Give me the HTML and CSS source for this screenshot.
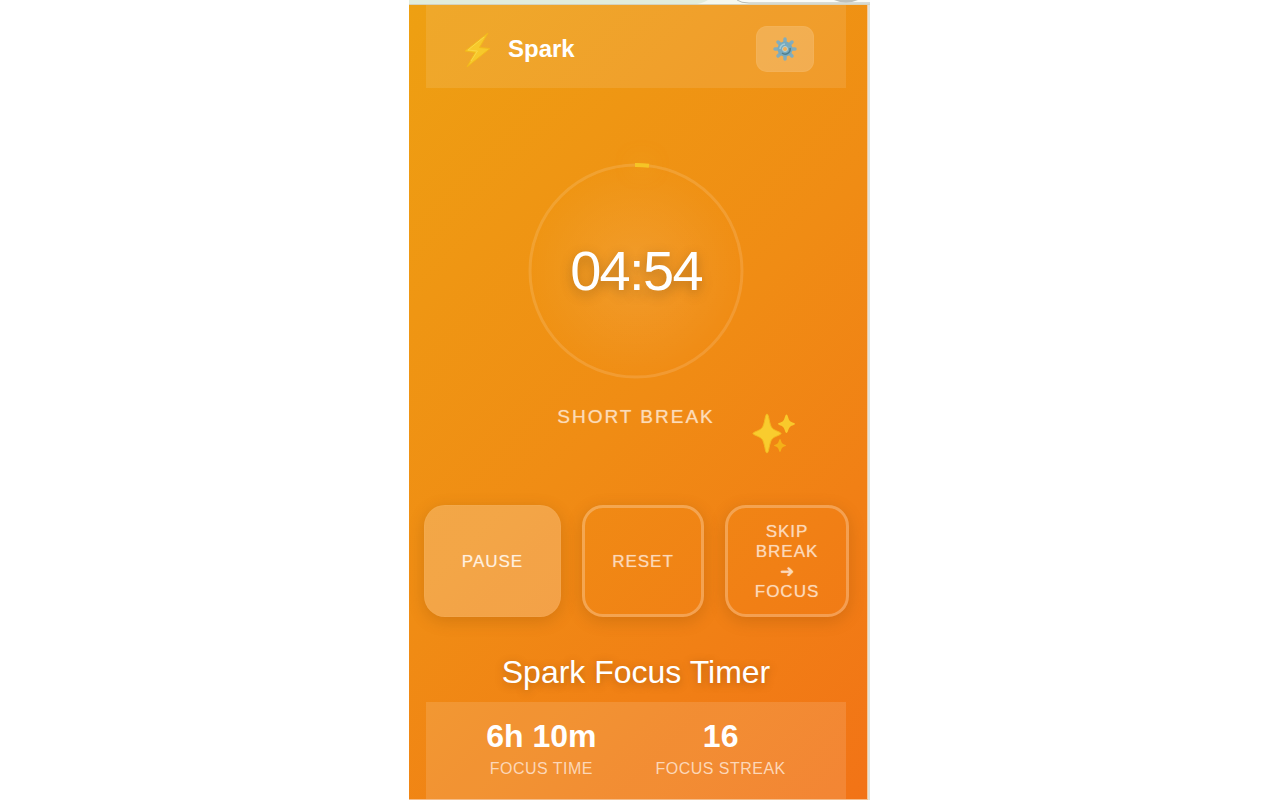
FILE: index.html
```html
<!DOCTYPE html>
<html lang="en">
<head>
<meta charset="utf-8">
<title>Spark Focus Timer</title>
<meta name="viewport" content="width=device-width, initial-scale=1">
<link rel="stylesheet" href="styles.css">
</head>
<body>
<div class="window">
  <div class="window-edge" aria-hidden="true">
    <svg viewBox="0 0 461 5" preserveAspectRatio="none">
      <rect width="461" height="5" fill="#f5f8ef"/>
      <path d="M0 0H299Q293 4 282 5H0Z" fill="#e1ecdc"/>
      <path d="M328 0Q332 3 340 3H461V0Z" fill="#fafcf7"/>
      <path d="M328 0Q332 3 340 3H461" fill="none" stroke="#b8bcb3"/>
      <path d="M425 0Q437 5 449 0Z" fill="#bec1bb"/>
      <path d="M0 4.5H461" stroke="#d5d2bd"/>
    </svg>
  </div>
  <main class="app">
    <header class="topbar">
      <div class="brand">
        <svg class="bolt" viewBox="0 0 28 36" aria-hidden="true">
          <path d="M25 1 2 19 12 20.500 4 35 27 16.500 16.500 15.500Z" fill="#f7c92b" stroke="#f3b91c" stroke-width="1" stroke-linejoin="round"/>
          <path d="M21 5 5 18 14.500 19 8 29" fill="none" stroke="#fad746" stroke-width="1"/>
        </svg>
        <span>Spark</span>
      </div>
      <button class="settings" type="button" aria-label="Settings">
        <svg viewBox="0 0 24 24" aria-hidden="true">
          <g stroke="#82adbe" stroke-width="3.500" stroke-linecap="round">
            <path d="M12 2V22M2 12H22M5 5 19 19M19 5 5 19"/>
          </g>
          <circle cx="12" cy="12" r="7.500" fill="#79aabd"/>
          <path d="M7 12A5 5 0 0 1 12 7" fill="none" stroke="#a2cbd6" stroke-width="1.500"/>
          <path d="M9 16A5 5 0 0 0 17 11" fill="none" stroke="#507f8e" stroke-width="1.500"/>
          <circle cx="12" cy="12" r="2.500" fill="#f4ae54" stroke="#b6d1d3" stroke-width="1"/>
        </svg>
      </button>
    </header>

    <section class="timer" aria-label="Timer">
      <div class="dial">
        <svg class="ring" viewBox="0 0 216 216" aria-hidden="true">
          <circle class="ring-track" cx="108" cy="108" r="106"/>
          <path class="ring-progress" d="M107 2A106 106 0 0 1 121 2.800"/>
        </svg>
        <time class="clock">04:54</time>
      </div>
      <p class="phase">SHORT BREAK</p>
      <svg class="sparkles" viewBox="0 0 44 42" aria-hidden="true">
        <path d="M15 1C17 1 17 11 20 15C23 18 29 19 29 20.500C29 22 23 23 20 26C17 30 17 40 15 40C13 40 13 30 10 26C7 23 1 22 1 20.500C1 19 7 18 10 15C13 11 13 1 15 1Z" fill="#f9cc2e" stroke="#f4bb20"/>
        <path d="M34.500 1.500C36 1.500 36 6 38 8C40 10 43 9.500 43 11C43 12 40 12 38 14C36 16 36 20 34.500 20C33 20 33 16 31 14C29 12 26 12 26 11C26 9.500 29 10 31 8C33 6 33 1.500 34.500 1.500Z" fill="#f9c92b"/>
        <path d="M28 26C29 26 29 29 30.500 30.500C32 32 34 31.500 34 32.500C34 33.500 32 33 30.500 34.500C29 36 29 39 28 39C27 39 27 36 25.500 34.500C24 33 22 33.500 22 32.500C22 31.500 24 32 25.500 30.500C27 29 27 26 28 26Z" fill="#f4b018"/>
      </svg>
    </section>

    <div class="controls">
      <button class="control primary" type="button">PAUSE</button>
      <button class="control" type="button">RESET</button>
      <button class="control skip" type="button">SKIP BREAK ➜ FOCUS</button>
    </div>

    <h1 class="title">Spark Focus Timer</h1>

    <footer class="stats">
      <div class="stat">
        <strong>6h 10m</strong>
        <span>FOCUS TIME</span>
      </div>
      <div class="stat">
        <strong>16</strong>
        <span>FOCUS STREAK</span>
      </div>
    </footer>
  </main>
</div>
</body>
</html>
```

FILE: styles.css
```css
* {
  box-sizing: border-box;
}

body {
  margin: 0;
  min-height: 100vh;
  display: flex;
  justify-content: center;
  padding-right: 1px;
  background: #fff;
  color: #fff;
  font-family: "Liberation Sans", Arial, sans-serif;
}

.window {
  width: 100%;
  max-width: 461px;
  display: flex;
  flex-direction: column;
  background: #e1e2d9;
  padding-bottom: 1px;
}

.window-edge svg {
  display: block;
  width: 100%;
  height: 5px;
}

.app {
  flex: 1;
  display: flex;
  flex-direction: column;
  margin-right: 2px;
  padding: 0 21px 0 17px;
  border-right: 1px solid #f6c898;
  border-bottom: 1px solid #f4bd8b;
  background: linear-gradient(135deg, #eea012 0%, #f08c14 50%, #f27316 100%);
}

.topbar {
  display: flex;
  align-items: center;
  justify-content: space-between;
  padding: 21px 32px 16px 37px;
  background: rgba(255, 255, 255, 0.1);
}

.brand {
  display: flex;
  align-items: center;
  gap: 17px;
  font-size: 24px;
  line-height: 28px;
  font-weight: 700;
}

.bolt {
  width: 28px;
  height: 36px;
  margin-top: 2px;
}

.settings {
  display: flex;
  align-items: center;
  justify-content: center;
  width: 58px;
  height: 46px;
  padding: 0;
  border: 1px solid rgba(255, 255, 255, 0.04);
  border-radius: 11px;
  background: rgba(255, 255, 255, 0.18);
}

.settings svg {
  width: 24px;
  height: 24px;
}

.timer {
  position: relative;
  display: flex;
  flex-direction: column;
  align-items: center;
  gap: 26px;
  padding-top: 75px;
}

.dial {
  position: relative;
  display: grid;
  place-items: center;
  width: 216px;
  height: 216px;
  border-radius: 50%;
  background: radial-gradient(circle, rgba(255, 255, 255, 0.1) 0%, rgba(255, 255, 255, 0) 70%);
}

.ring {
  position: absolute;
  inset: 0;
  overflow: visible;
}

.ring-track {
  fill: none;
  stroke: rgba(255, 255, 255, 0.13);
  stroke-width: 3;
}

.ring-progress {
  fill: none;
  stroke: #f5c526;
  stroke-width: 4;
  filter: drop-shadow(0 0 10px rgba(255, 210, 70, 0.5));
}

.clock {
  position: relative;
  font-size: 56px;
  line-height: 64px;
  letter-spacing: -0.03em;
  text-shadow: 0 4px 12px rgba(70, 50, 20, 0.35);
}

.phase {
  margin: 0;
  font-size: 19px;
  line-height: 24px;
  letter-spacing: 2px;
  color: #fcdcb8;
  text-shadow: 0 0 1px rgba(252, 220, 184, 0.7);
}

.sparkles {
  position: absolute;
  right: 50px;
  bottom: -26px;
  width: 44px;
  height: 42px;
}

.controls {
  display: grid;
  grid-template-columns: 137fr 122fr 124fr;
  gap: 21px;
  margin: 76px -3px 0 -2px;
}

.control {
  min-height: 111px;
  padding: 14px 24px 12px;
  border: 3px solid rgba(255, 255, 255, 0.26);
  border-radius: 21px;
  background: none;
  box-shadow: 0 4px 16px rgba(110, 60, 0, 0.22);
  color: #fcd9b9;
  font: 500 17px/20px "Liberation Sans", Arial, sans-serif;
  letter-spacing: 1px;
  text-shadow: 0 0 1px rgba(252, 217, 185, 0.7);
}

.primary {
  border: 1px solid rgba(255, 255, 255, 0.03);
  background: rgba(255, 255, 255, 0.22);
  color: #fff0df;
}

.title {
  margin: 37px 0 12px;
  font-size: 32px;
  line-height: 36px;
  font-weight: 400;
  text-align: center;
  text-shadow: 0 2px 8px rgba(90, 50, 10, 0.35);
}

.stats {
  flex: 1;
  display: flex;
  justify-content: center;
  gap: 59px;
  padding: 15px 0 16px;
  background: rgba(255, 255, 255, 0.13);
}

.stat {
  display: flex;
  flex-direction: column;
  align-items: center;
}

.stat strong {
  font-size: 32px;
  line-height: 38px;
}

.stat span {
  font-size: 16px;
  line-height: 28px;
  letter-spacing: 0.03em;
  color: #fcd7b8;
}
```
